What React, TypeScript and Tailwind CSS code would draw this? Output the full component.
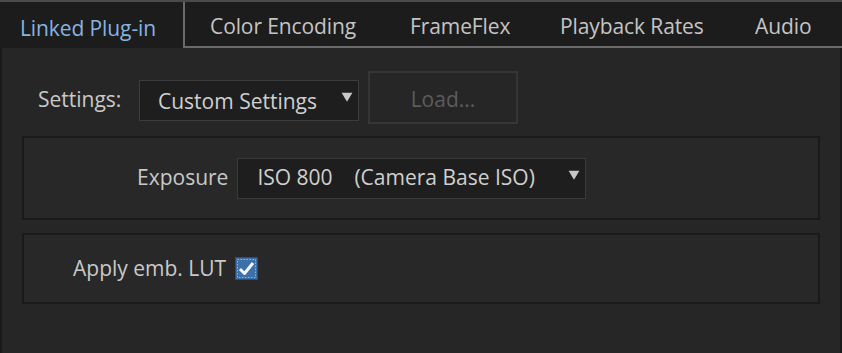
import React from "react";

const tabs = [
  { label: "Linked Plug-in", w: 185 },
  { label: "Color Encoding", w: 200 },
  { label: "FrameFlex", w: 150 },
  { label: "Playback Rates", w: 195 },
  { label: "Audio", w: 80 },
];

const Caret = () => (
  <svg width="12" height="12" viewBox="0 0 10 10" className="shrink-0 -mt-[6px]">
    <path d="M0.5 1.5 L9.5 1.5 L5 9 Z" fill="#c8c8c8" />
  </svg>
);

const CheckBox = () => (
  <svg width="23" height="23" viewBox="0 0 23 23">
    <rect x="0.5" y="0.5" width="22" height="22" fill="#3d6fa8" stroke="#2a4f7c" />
    <rect x="2.5" y="2.5" width="18" height="18" fill="none" stroke="#8fb3dc" strokeDasharray="1.5 1.5" />
    <path d="M5 12 L9.5 16.5 L18 6" fill="none" stroke="#f2f6fb" strokeWidth="3" strokeLinejoin="round" />
  </svg>
);

export default function App() {
  return (
    <div
      className="w-[842px] h-[353px] bg-[#262626] flex flex-col overflow-hidden text-[#c9c9c9]"
      style={{ fontFamily: '"Open Sans", "Noto Sans", sans-serif' }}
    >
      {/* tab bar */}
      <div className="h-[48px] bg-[#1c1c1c] border-t-2 border-[#4a4a4a] flex items-end shrink-0 text-[21px] tracking-[-0.1px]">
        {tabs.map((t, i) =>
          i === 0 ? (
            <div
              key={t.label}
              className="h-[46px] shrink-0 border-r-2 border-[#6a6a6a] flex items-center pt-[8px] pl-[20px] text-[#86b3e0]"
              style={{ width: t.w }}
            >
              {t.label}
            </div>
          ) : (
            <div
              key={t.label}
              className="h-[46px] shrink-0 flex items-center pt-[6px] pl-[25px] border-b-2 border-[#6a6a6a] text-[#c4c4c4] whitespace-nowrap"
              style={{ width: t.w }}
            >
              {t.label}
            </div>
          )
        )}
        <div className="flex-1 h-[46px] border-b-2 border-[#6a6a6a]" />
      </div>

      {/* panel */}
      <div className="flex-1 border-l-2 border-r-2 border-[#1a1a1a] flex flex-col px-[20px] text-[21px]">
        <div className="flex items-center h-[88px] pt-[10px] pl-[16px]">
          <span className="w-[101px] shrink-0 pt-[6px]">Settings:</span>
          <div className="h-[41px] w-[220px] shrink-0 bg-[#1e1e1e] border border-[#3c3c3c] flex items-center justify-between pl-[18px] pr-[5px] mt-[6px]">
            <span className="text-[#d0d0d0] whitespace-nowrap pt-[3px]">Custom Settings</span>
            <Caret />
          </div>
          <div className="h-[53px] w-[150px] ml-[9px] shrink-0 border-2 border-[#363636] flex items-center justify-center pt-[5px] text-[#5c5c5c]">
            Load...
          </div>
        </div>

        <div className="h-[84px] border-2 border-[#1a1a1a] bg-[#282828] flex items-center pl-[113px] gap-[9px]">
          <span>Exposure</span>
          <div className="h-[41px] w-[349px] bg-[#1e1e1e] border border-[#3a3a3a] flex items-center justify-between pl-[19px] pr-[5px]">
            <span className="text-[#d0d0d0] whitespace-pre">ISO 800    (Camera Base ISO)</span>
            <Caret />
          </div>
        </div>

        <div className="h-[71px] mt-[13px] border-2 border-[#1a1a1a] bg-[#282828] flex items-center pl-[49px] gap-[9px]">
          <span>Apply emb. LUT</span>
          <CheckBox />
        </div>
      </div>
    </div>
  );
}
